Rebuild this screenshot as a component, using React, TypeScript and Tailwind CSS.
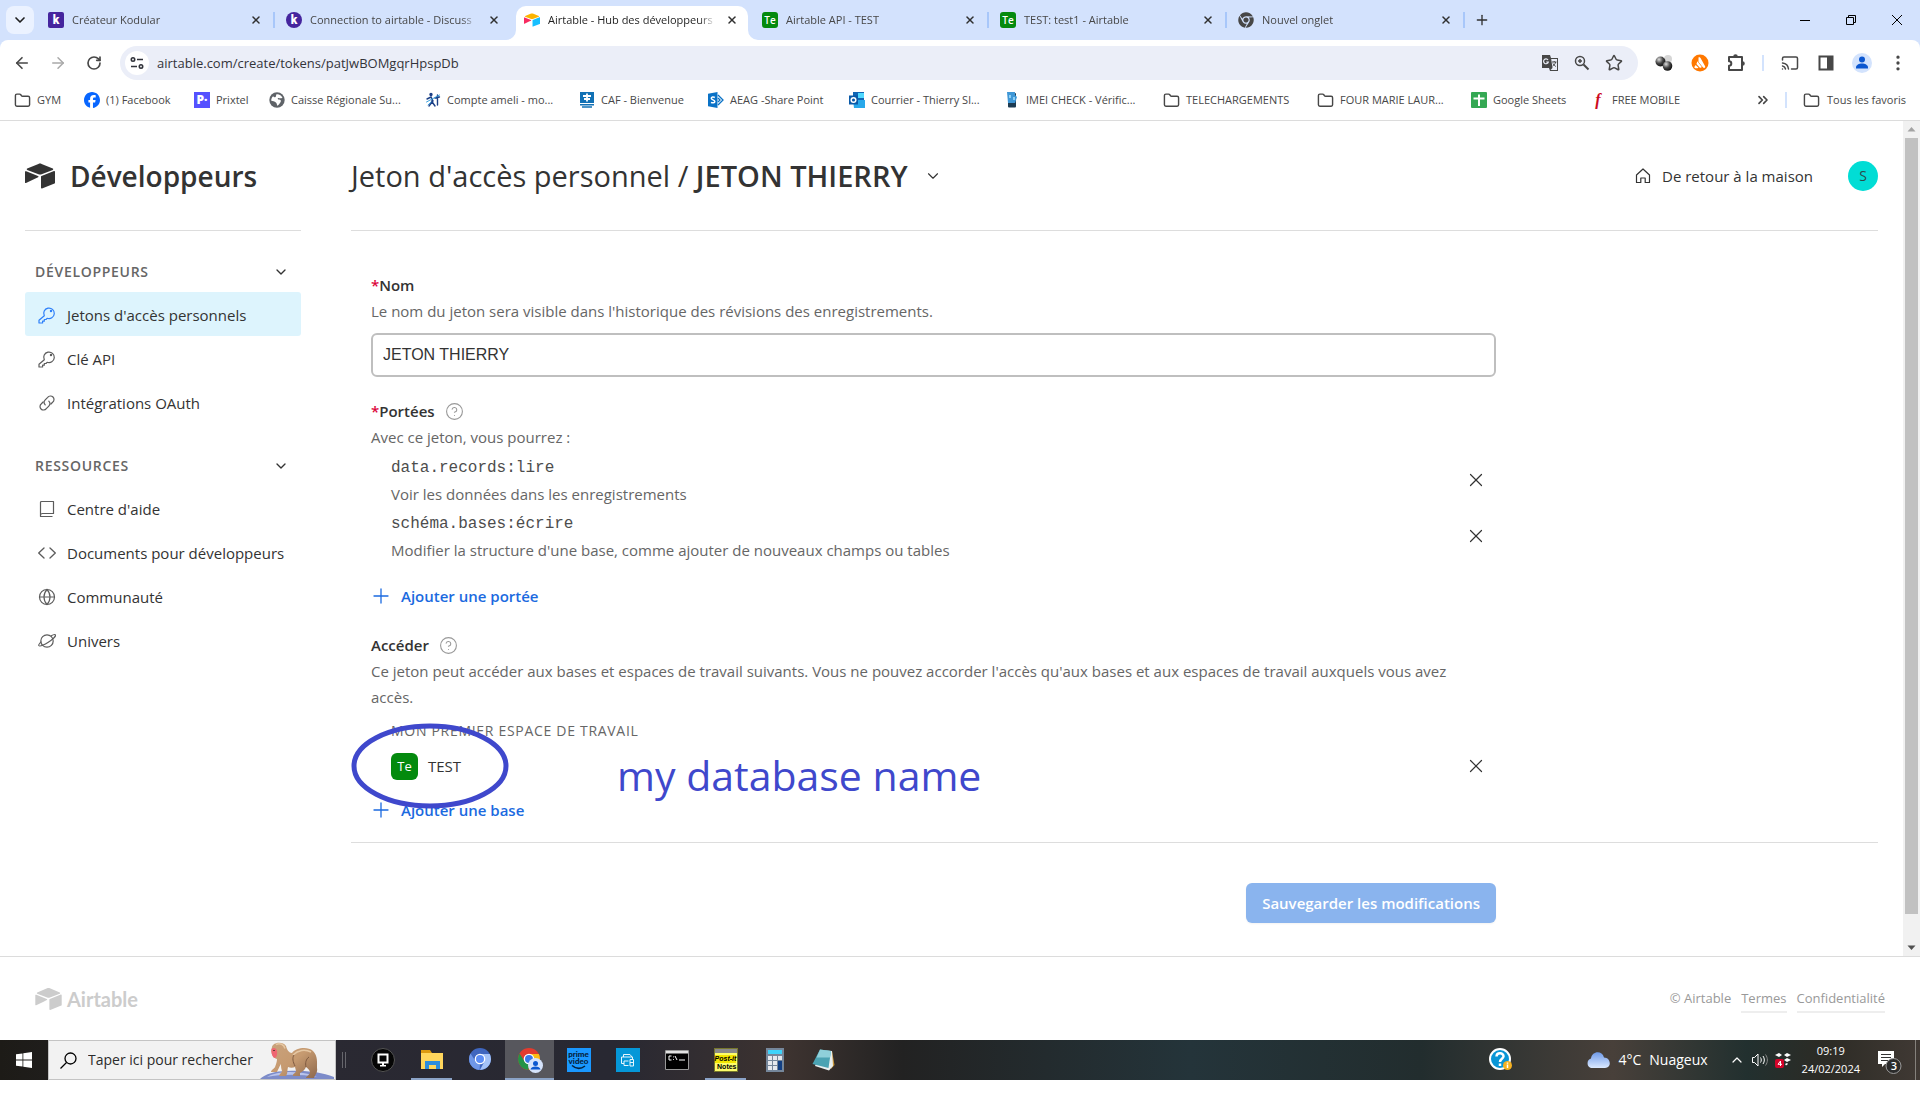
import { useState, type ReactNode } from "react";
import {
  ArrowLeft,
  ArrowRight,
  Cast,
  ChevronDown,
  ChevronUp,
  ChevronsRight,
  CircleHelp,
  EllipsisVertical,
  Folder,
  Globe,
  Plus,
  RotateCw,
  Star,
  X,
  ZoomIn,
} from "lucide-react";
import { SiFacebook } from "react-icons/si";
import { FaChrome } from "react-icons/fa";

/* ---------- icons ---------- */

function AirtableMark({ className, colors }: { className?: string; colors?: [string, string, string] }) {
  const [top, right, left] = colors ?? ["currentColor", "currentColor", "currentColor"];
  return (
    <svg viewBox="0 0 30 25" className={className} aria-hidden="true">
      <path fill={top} d="M13.4.4 2.2 5c-.6.3-.6 1.1 0 1.4l11.3 4.4c1 .4 2.1.4 3.1 0L27.8 6.4c.6-.3.6-1.1 0-1.4L16.6.4c-1-.4-2.2-.4-3.2 0Z" />
      <path fill={right} d="M16 13.1v11.1c0 .6.5.9 1 .7l12.500-4.900c.3-.1.5-.4.5-.7V8.200c0-.6-.5-.9-1-.7L16.500 12.400c-.3.1-.5.400-.5.700Z" />
      <path fill={left} d="m13.100 13.700-3.700 1.800-8.400 4c-.5.300-1-.1-1-.6V8.300c0-.2.100-.4.300-.5.200-.2.600-.2.900-.1l11.800 4.700c.6.200.7 1 .1 1.300Z" />
    </svg>
  );
}

function KodularIcon({ round }: { round?: boolean }) {
  return (
    <span
      className={`flex size-4 shrink-0 items-center justify-center bg-[#45259e] font-['Roboto',sans-serif] text-xs font-black leading-none text-white ${
        round ? "rounded-full" : "rounded-xs"
      }`}
    >
      k
    </span>
  );
}

function TeIcon() {
  return (
    <span className="flex size-4 shrink-0 items-center justify-center rounded-[3px] bg-[#048a0e] text-[10px] font-semibold leading-none text-white">
      Te
    </span>
  );
}

function KeyIcon() {
  return (
    <svg viewBox="0 0 18 18" className="size-[18px]" fill="none" stroke="currentColor" strokeWidth="1.200" strokeLinejoin="round" aria-hidden="true">
      <path d="M6.300 9.800A5.300 5.300 0 1 1 9.100 12.300L8 13.500H6.300v1.700H4.600V17H1v-2.700Z" />
      <circle cx="13" cy="5" r=".6" fill="currentColor" />
    </svg>
  );
}

function LinkIcon() {
  return (
    <svg viewBox="0 0 18 18" className="size-[18px]" fill="none" stroke="currentColor" strokeWidth="1.200" strokeLinecap="round" aria-hidden="true">
      <path d="M7.200 10.800a3.500 3.500 0 0 1 0-4.900l2.500-2.500a3.500 3.500 0 1 1 4.900 4.900l-1.700 1.700" />
      <path d="M10.800 7.200a3.500 3.500 0 0 1 0 4.900l-2.500 2.500a3.500 3.500 0 1 1-4.900-4.900l1.700-1.700" />
    </svg>
  );
}

function BookIcon() {
  return (
    <svg viewBox="0 0 18 18" className="size-[18px]" fill="none" stroke="currentColor" strokeWidth="1.200" strokeLinejoin="round" aria-hidden="true">
      <path d="M2.500 15.500V2.500a1 1 0 0 1 1-1h12v12h-11a2 2 0 0 0-2 2Zm0 0v1h12" />
    </svg>
  );
}

function CodeIcon() {
  return (
    <svg viewBox="0 0 18 18" className="size-[18px]" fill="none" stroke="currentColor" strokeWidth="1.300" strokeLinecap="round" strokeLinejoin="round" aria-hidden="true">
      <path d="M6 4 .700 9 6 14M12 4l5.300 5L12 14" />
    </svg>
  );
}

function PlanetIcon() {
  return (
    <svg viewBox="0 0 18 18" className="size-[18px]" fill="none" stroke="currentColor" strokeWidth="1.200" aria-hidden="true">
      <circle cx="9" cy="9" r="6.200" />
      <path d="M12.800 4C15.300 2.600 17 2.200 17.400 2.900c.7 1.200-2.500 4.500-7.100 7.300S1.500 14.600.8 13.500c-.400-.7.600-2.200 2.600-3.900" />
    </svg>
  );
}

function HomeIcon() {
  return (
    <svg viewBox="0 0 16 16" className="size-4" fill="none" stroke="currentColor" strokeWidth="1.200" strokeLinejoin="round" aria-hidden="true">
      <path d="M1.500 7 8 1l6.500 6v7.500h-4.300V10H5.800v4.500H1.500Z" />
    </svg>
  );
}

function TranslateIcon() {
  return (
    <svg viewBox="0 0 18 18" className="size-[18px]" aria-hidden="true">
      <path fill="#474747" d="M1 1h8l1 3h7v13H9l-1-3H1Z" />
      <path fill="#ebeef8" d="M10.200 5H16v11H9.500L11.500 14Z" />
      <path fill="none" stroke="#ebeef8" strokeWidth="1.200" d="M7 6a2.400 2.400 0 1 0 .3 2H5.200" />
      <path fill="none" stroke="#474747" d="M11 8h4.500M13.200 7v1M14.700 8c-.4 1.800-1.700 3.200-3 4M12 9.500c.6 1.200 1.600 2.200 2.800 3" />
    </svg>
  );
}

function TuneIcon() {
  return (
    <svg viewBox="0 0 16 16" className="size-4" fill="none" stroke="#30323a" strokeWidth="1.600" aria-hidden="true">
      <circle cx="4" cy="4.500" r="1.700" />
      <circle cx="12" cy="11.500" r="1.700" />
      <path d="M8 4.500h6M2 11.500h6" />
    </svg>
  );
}

function PuzzleIcon() {
  return (
    <svg viewBox="0 0 20 20" className="size-5" fill="none" stroke="currentColor" strokeWidth="2" strokeLinejoin="round" aria-hidden="true">
      <path d="M3 4h13v13H3v-4.200a2.300 2.300 0 0 0 0-4.600Z" />
      <path fill="currentColor" stroke="none" d="M7.200 3.500a2.300 2.300 0 0 1 4.600 0ZM16.500 8.200a2.300 2.300 0 0 1 0 4.600Z" />
    </svg>
  );
}

function BallsIcon() {
  return (
    <svg viewBox="0 0 18 18" className="size-[18px]" aria-hidden="true">
      <defs>
        <radialGradient id="ball" cx=".35" cy=".3" r=".8">
          <stop offset="0" stopColor="#ddd" />
          <stop offset=".5" stopColor="#444" />
          <stop offset="1" stopColor="#000" />
        </radialGradient>
      </defs>
      <circle cx="13" cy="5" r="4" fill="#d6d6d6" />
      <circle cx="5.500" cy="7.500" r="5" fill="url(#ball)" />
      <circle cx="12.500" cy="12" r="4.800" fill="url(#ball)" />
    </svg>
  );
}

function AvastIcon() {
  return (
    <svg viewBox="0 0 18 18" className="size-[18px]" aria-hidden="true">
      <circle cx="9" cy="9" r="8.500" fill="#ff7800" />
      <path fill="#fff" d="M7.500 3.500c1-.8 2 .1 2.300 1l4.300 7.700c.6 1.200-.8 2.300-2 1.400L7.500 8Z" />
      <path fill="#fff" d="m6.300 7.300 4.500 5.700c-.5 1-1.600.9-2.200.5L5.500 10ZM4.700 11l2.800 2.800c-2 1-4.300.5-4.200-.7Z" />
    </svg>
  );
}

function GlobeFavicon() {
  return (
    <svg viewBox="0 0 16 16" className="size-4" aria-hidden="true">
      <circle cx="8" cy="8" r="7.700" fill="#5f6368" />
      <path fill="#fff" d="M7.500 2.200c2.500-.4 5.200 1.400 6 3.600-1.500.8-3 .5-4 .2-1.300-.3-.8 1.600.5 1.600 1.600 0 2.400 1 1.600 2.300-.8 1.500-1.600 2.700-3.300 3.900-.6-1.600-.3-2.400-1.400-3.300C5.600 9.400 3.700 9 2.300 8.800 2 7 3 5.300 4.200 4.300c.6.8 1.400 1.200 2.300.6.800-.5.300-1.700 1-2.700Z" />
    </svg>
  );
}

function AmeliFavicon() {
  return (
    <svg viewBox="0 0 16 16" className="size-4" fill="none" stroke="#1b3f86" strokeWidth="1.400" strokeLinecap="round" aria-hidden="true">
      <circle cx="6" cy="2.500" r="1" fill="#1b3f86" />
      <path d="m2 7 4-2 2 4-4 5M6.500 9l3.500 5M12.500 3v10M10 6l4.500-1" />
      <path stroke="#3aa0dd" strokeWidth="1" d="M1.500 10 14.500 3M3 13l3-3" />
    </svg>
  );
}

function CafFavicon() {
  return (
    <svg viewBox="0 0 16 16" className="size-4" aria-hidden="true">
      <path fill="#1271b5" d="M1 0h14v11H1Z" />
      <path stroke="#fff" strokeWidth="1.800" d="M8 1.500v8M4 4h8M5 7h6" />
      <path stroke="#1271b5" strokeWidth="1.500" d="M1 12.800h14M3 15h10" />
    </svg>
  );
}

function SharePointFavicon() {
  return (
    <svg viewBox="0 0 16 16" className="size-4" aria-hidden="true">
      <path fill="#0a72c6" d="M0 1.800 9.500 0v16L0 14.200Z" />
      <path fill="none" stroke="#0a72c6" strokeWidth="1.300" d="m10 3 5 5-5 5M10 6l2 2-2 2" />
      <path fill="none" stroke="#fff" strokeWidth="1.500" d="M6.800 5.500C5.500 4.700 3.300 4.900 3.300 6.300c0 1.800 3.500 1.300 3.500 3.200 0 1.600-2.300 1.600-3.800.8" />
    </svg>
  );
}

function OutlookFavicon() {
  return (
    <svg viewBox="0 0 16 16" className="size-4" aria-hidden="true">
      <path fill="#1066b5" d="M4 0h11v8H4Z" />
      <path fill="#50d9ff" d="M9 1h6v5H9Z" />
      <path fill="#28a8ea" d="M4 8h12v8H5Z" />
      <path fill="#0a5aa8" d="M0 3.500h9v9H0Z" />
      <circle cx="4.500" cy="8" r="2.300" fill="none" stroke="#fff" strokeWidth="1.500" />
    </svg>
  );
}

function PhoneFavicon() {
  return (
    <svg viewBox="0 0 16 16" className="size-4" aria-hidden="true">
      <rect x="4" y="1" width="8" height="14.500" rx="1" fill="#1d3b52" />
      <path fill="#3f97d6" d="M3 0h8v3l2 2-2 6H4Z" />
      <path fill="#8fd0f5" d="M5 3h2v3H5ZM9 5h2v3H9Z" />
    </svg>
  );
}

function SheetsFavicon() {
  return (
    <svg viewBox="0 0 16 16" className="size-4" aria-hidden="true">
      <rect width="16" height="16" rx="1" fill="#34a853" />
      <path stroke="#fff" strokeWidth="2" d="M2.500 6.500h11M8 2.500v11.500" />
    </svg>
  );
}

/* ---------- browser chrome ---------- */

const tabs = [
  { title: "Créateur Kodular", icon: <KodularIcon /> },
  { title: "Connection to airtable - Discuss", icon: <KodularIcon round /> },
  {
    title: "Airtable - Hub des développeurs",
    icon: <AirtableMark className="size-4 shrink-0" colors={["#fcb400", "#18bfff", "#f82b60"]} />,
    active: true,
  },
  { title: "Airtable API - TEST", icon: <TeIcon /> },
  { title: "TEST: test1 - Airtable", icon: <TeIcon /> },
  { title: "Nouvel onglet", icon: <FaChrome className="size-4 shrink-0 text-[#474747]" /> },
];

function TabStrip() {
  return (
    <div className="flex h-10 items-stretch">
      <div className="flex w-[37px] shrink-0 items-center pl-[6px]">
        <button aria-label="Rechercher dans les onglets" className="flex size-7 items-center justify-center rounded-lg bg-[#ebf2ff]">
          <ChevronDown className="size-4 text-[#1f1f1f]" strokeWidth={2.500} />
        </button>
      </div>
      {tabs.map((tab, i) => {
        const nextActive = tabs[i + 1]?.active;
        return (
          <div key={tab.title} className="relative flex min-w-0 max-w-[238px] flex-1 items-center">
            {tab.active && (
              <>
                <div className="absolute inset-x-[3px] bottom-0 top-[6px] rounded-t-[10px] bg-white" />
                <svg viewBox="0 0 10 10" className="absolute -left-[7px] bottom-0 size-[10px] fill-white" aria-hidden="true">
                  <path d="M10 0v10H0A10 10 0 0 0 10 0Z" />
                </svg>
                <svg viewBox="0 0 10 10" className="absolute -right-[7px] bottom-0 size-[10px] fill-white" aria-hidden="true">
                  <path d="M0 0v10h10A10 10 0 0 1 0 0Z" />
                </svg>
              </>
            )}
            <div className="relative flex min-w-0 flex-1 items-center gap-2 pl-[11px] pr-[11px]">
              {tab.icon}
              <span
                className={`min-w-0 flex-1 overflow-hidden whitespace-nowrap [mask-image:linear-gradient(to_right,black_90%,transparent)] ${
                  tab.active ? "text-[#1f1f1f]" : "text-[#474747]"
                }`}
              >
                {tab.title}
              </span>
              <button aria-label={`Fermer ${tab.title}`} className="flex size-4 shrink-0 items-center justify-center">
                <X className="size-3 text-[#303030]" strokeWidth={3} />
              </button>
            </div>
            {!tab.active && !nextActive && <div className="absolute right-0 h-4 w-[2px] bg-[#a8c7fa]" />}
          </div>
        );
      })}
      <button aria-label="Nouvel onglet" className="flex w-[34px] shrink-0 items-center justify-center">
        <Plus className="size-4 text-[#303030]" />
      </button>
      <div className="ml-auto flex shrink-0 text-black">
        <button aria-label="Réduire" className="flex w-[46px] items-center justify-center">
          <svg viewBox="0 0 10 10" className="size-[10px]" stroke="currentColor"><path d="M0 5.500h10" /></svg>
        </button>
        <button aria-label="Restaurer" className="flex w-[46px] items-center justify-center">
          <svg viewBox="0 0 10 10" className="size-[10px]" fill="none" stroke="currentColor"><path d="M.5 2.500h7v7h-7ZM2.500 2.500v-2h7v7h-2" /></svg>
        </button>
        <button aria-label="Fermer" className="flex w-[46px] items-center justify-center">
          <svg viewBox="0 0 10 10" className="size-[10px]" stroke="currentColor"><path d="m0 0 10 10M10 0 0 10" /></svg>
        </button>
      </div>
    </div>
  );
}

function ToolButton({ label, children }: { label: string; children: ReactNode }) {
  return (
    <button aria-label={label} className="flex h-8 w-9 shrink-0 items-center justify-center text-[#474747]">
      {children}
    </button>
  );
}

function Toolbar() {
  const [url, setUrl] = useState("airtable.com/create/tokens/patJwBOMgqrHpspDb");
  return (
    <div className="flex h-[46px] items-center pl-1 pr-1">
      <ToolButton label="Précédent"><ArrowLeft className="size-[18px]" strokeWidth={2.200} /></ToolButton>
      <ToolButton label="Suivant"><ArrowRight className="size-[18px] text-[#a9a9a9]" /></ToolButton>
      <ToolButton label="Actualiser"><RotateCw className="size-4" strokeWidth={2.500} /></ToolButton>
      <div className="ml-2 flex h-[34px] flex-1 items-center rounded-full bg-[#ebeef8] pl-[5px] pr-2">
        <button aria-label="Informations sur le site" className="flex size-6 items-center justify-center rounded-full bg-white">
          <TuneIcon />
        </button>
        <input
          aria-label="Adresse"
          value={url}
          onChange={(e) => setUrl(e.target.value)}
          className="ml-2 min-w-0 flex-1 bg-transparent text-[13px] text-[#33343a] outline-none"
        />
        <button aria-label="Traduire" className="flex w-8 justify-center"><TranslateIcon /></button>
        <button aria-label="Zoom" className="flex w-8 justify-center text-[#474747]">
          <svg viewBox="0 0 16 16" className="size-4" fill="none" stroke="currentColor" strokeWidth="1.500" aria-hidden="true">
            <circle cx="6" cy="6" r="4.500" />
            <path strokeWidth="2" d="m9.500 9.500 5 5" />
            <path d="M4 6h4M6 4v4" />
          </svg>
        </button>
        <button aria-label="Ajouter aux favoris" className="flex w-8 justify-center text-[#474747]"><Star className="size-[18px]" /></button>
      </div>
      <div className="ml-2 flex items-center">
        <ToolButton label="Extension"><BallsIcon /></ToolButton>
        <ToolButton label="Avast"><AvastIcon /></ToolButton>
        <ToolButton label="Extensions"><PuzzleIcon /></ToolButton>
        <div className="mx-2 h-4 w-[2px] bg-[#d3e3fd]" />
        <ToolButton label="Caster"><Cast className="size-[18px]" /></ToolButton>
        <ToolButton label="Panneau latéral">
          <svg viewBox="0 0 16 16" className="size-4" aria-hidden="true">
            <rect x="1.500" y="1.500" width="13" height="13" fill="none" stroke="#474747" strokeWidth="2" />
            <path fill="#474747" d="M9 1h6v14H9Z" />
          </svg>
        </ToolButton>
        <ToolButton label="Profil">
          <svg viewBox="0 0 20 20" className="size-5" aria-hidden="true">
            <circle cx="10" cy="10" r="10" fill="#d3e3fd" />
            <circle cx="10" cy="6.500" r="3" fill="#0b57d0" />
            <path fill="#0b57d0" d="M4 15.500v-1c0-2.500 3-4 6-4s6 1.500 6 4v1Z" />
          </svg>
        </ToolButton>
        <ToolButton label="Menu"><EllipsisVertical className="size-5" /></ToolButton>
      </div>
    </div>
  );
}

const folder = <Folder className="size-[17px] text-[#474747]" />;

const bookmarks = [
  { label: "GYM", icon: folder, width: "w-[70px]" },
  { label: "(1) Facebook", icon: <SiFacebook className="size-4 text-[#0866ff]" />, width: "w-[110px]" },
  {
    label: "Prixtel",
    icon: <span className="flex size-4 items-center justify-center bg-[#5551ff] text-xs font-extrabold leading-none text-white">P·</span>,
    width: "w-[75px]",
  },
  { label: "Caisse Régionale Su...", icon: <GlobeFavicon />, width: "w-[156px]" },
  { label: "Compte ameli - mo...", icon: <AmeliFavicon />, width: "w-[154px]" },
  { label: "CAF - Bienvenue", icon: <CafFavicon />, width: "w-[129px]" },
  { label: "AEAG -Share Point", icon: <SharePointFavicon />, width: "w-[141px]" },
  { label: "Courrier - Thierry Sl...", icon: <OutlookFavicon />, width: "w-[155px]" },
  { label: "IMEI CHECK - Vérific...", icon: <PhoneFavicon />, width: "w-[159px]" },
  { label: "TELECHARGEMENTS", icon: folder, width: "w-[154px]" },
  { label: "FOUR MARIE LAUR...", icon: folder, width: "w-[154px]" },
  { label: "Google Sheets", icon: <SheetsFavicon />, width: "w-[119px]" },
  {
    label: "FREE MOBILE",
    icon: <span className="flex size-4 items-center justify-center font-['Liberation_Serif',serif] text-base font-bold italic leading-none text-[#cd0a1e]">f</span>,
    width: "w-[110px]",
  },
];

function BookmarksBar() {
  return (
    <nav aria-label="Favoris" className="flex h-[35px] items-center border-b border-[#dcdcdc] pb-[6px] pl-[14px] pr-[14px] text-[#474747]">
      {bookmarks.map((item) => (
        <a key={item.label} href="#" className={`flex items-center gap-[6px] whitespace-nowrap ${item.width}`}>
          <span className="shrink-0">{item.icon}</span>
          {item.label}
        </a>
      ))}
      <div className="ml-auto flex items-center">
        <button aria-label="Autres favoris" className="mr-[14px]"><ChevronsRight className="size-4" strokeWidth={2.500} /></button>
        <div className="mr-4 h-4 w-[2px] bg-[#d3e3fd]" />
        <a href="#" className="flex items-center gap-[7px] whitespace-nowrap">{folder}Tous les favoris</a>
      </div>
    </nav>
  );
}

/* ---------- page ---------- */

const navGroups = [
  {
    title: "Développeurs",
    items: [
      { label: "Jetons d'accès personnels", icon: <KeyIcon />, active: true },
      { label: "Clé API", icon: <KeyIcon /> },
      { label: "Intégrations OAuth", icon: <LinkIcon /> },
    ],
  },
  {
    title: "Ressources",
    items: [
      { label: "Centre d'aide", icon: <BookIcon /> },
      { label: "Documents pour développeurs", icon: <CodeIcon /> },
      { label: "Communauté", icon: <Globe className="size-[18px]" strokeWidth={1.600} /> },
      { label: "Univers", icon: <PlanetIcon /> },
    ],
  },
];

function Sidebar() {
  return (
    <aside className="w-[276px] shrink-0">
      <div className="flex h-[110px] items-center gap-[15px] border-b border-[#dddddd]">
        <AirtableMark className="h-[26px] w-[30px]" />
        <span className="text-[28px] font-semibold">Développeurs</span>
      </div>
      <div className="flex flex-col gap-[22px] pt-[21px]">
        {navGroups.map((group) => (
          <nav key={group.title} aria-label={group.title}>
            <button className="flex h-10 w-full items-center justify-between pl-[10px] pr-3 text-sm font-semibold uppercase tracking-wider text-[#666666]">
              {group.title}
              <ChevronDown className="size-4 text-[#333333]" />
            </button>
            {group.items.map((item) => (
              <a
                key={item.label}
                href="#"
                className={`flex h-11 items-center gap-[11px] whitespace-nowrap rounded-[3px] pl-[13px] pt-px ${item.active ? "bg-[#ddf4fd]" : ""}`}
              >
                <span className={item.active ? "text-[#2d7ff9]" : "text-[#5c5c5c]"}>{item.icon}</span>
                {item.label}
              </a>
            ))}
          </nav>
        ))}
      </div>
    </aside>
  );
}

function RemoveButton({ label }: { label: string }) {
  return (
    <button type="button" aria-label={`Supprimer ${label}`} className="flex size-10 items-center justify-center">
      <X className="size-[22px]" strokeWidth={1.300} />
    </button>
  );
}

function AddButton({ children }: { children: ReactNode }) {
  return (
    <button type="button" className="flex items-center gap-[10px] font-semibold text-[#1b6ae0]">
      <svg viewBox="0 0 20 20" className="size-5" stroke="currentColor" strokeWidth="1.300" strokeLinecap="round" aria-hidden="true">
        <path d="M10 3v14M3 10h14" />
      </svg>
      {children}
    </button>
  );
}

const scopes = [
  { name: "data.records:lire", description: "Voir les données dans les enregistrements" },
  { name: "schéma.bases:écrire", description: "Modifier la structure d'une base, comme ajouter de nouveaux champs ou tables" },
];

function TokenForm() {
  const [name, setName] = useState("JETON THIERRY");
  return (
    <form onSubmit={(e) => e.preventDefault()}>
      <div className="border-b border-[#dddddd] px-5 pb-[19px] pt-[41px]">
        <div className="max-w-[1125px]">
          <label htmlFor="token-name" className="block font-semibold">
            <span className="text-[#dc043b]">*</span>Nom
          </label>
          <p className="text-[#666666]">Le nom du jeton sera visible dans l'historique des révisions des enregistrements.</p>
          <input
            id="token-name"
            value={name}
            onChange={(e) => setName(e.target.value)}
            className="mt-[9px] h-11 w-full rounded-md border-2 border-[#bfbfbf] px-[10px] font-['Liberation_Sans',sans-serif] text-base"
          />

          <h2 className="mt-[21px] flex items-center gap-[10px] font-semibold">
            <span><span className="text-[#dc043b]">*</span>Portées</span>
            <CircleHelp className="size-[19px] text-[#999999]" strokeWidth={1.400} />
          </h2>
          <p className="text-[#666666]">Avec ce jeton, vous pourrez :</p>
          <ul className="pt-[2px]">
            {scopes.map((scope) => (
              <li key={scope.name} className="flex h-14 items-center justify-between pl-5">
                <div className="pt-[2px]">
                  <div className="font-['Liberation_Mono',monospace] text-base leading-[26px] text-[#4d4d4d]">{scope.name}</div>
                  <p className="text-[#666666]">{scope.description}</p>
                </div>
                <RemoveButton label={scope.name} />
              </li>
            ))}
          </ul>
          <div className="pt-[19px]"><AddButton>Ajouter une portée</AddButton></div>

          <h2 className="mt-[23px] flex items-center gap-[10px] font-semibold">
            Accéder
            <CircleHelp className="size-[19px] text-[#999999]" strokeWidth={1.400} />
          </h2>
          <p className="max-w-[1110px] text-[#666666]">
            Ce jeton peut accéder aux bases et espaces de travail suivants. Vous ne pouvez accorder l'accès qu'aux bases et aux espaces de travail auxquels vous avez accès.
          </p>
          <h3 className="mt-2 pl-5 text-sm uppercase tracking-wider text-[#666666] leading-[26px]">Mon premier espace de travail</h3>
          <div className="relative flex h-11 items-center pl-5">
            <span className="flex size-[27px] items-center justify-center rounded-md bg-[#048a0e] text-[13px] text-white">Te</span>
            <span className="ml-[10px] flex-1">TEST</span>
            <RemoveButton label="TEST" />
            <svg viewBox="0 0 160 88" className="pointer-events-none absolute -left-5 -top-[22px] z-10 h-[88px] w-40" fill="none" stroke="#3f48cc" strokeWidth="5" aria-hidden="true">
              <ellipse cx="79" cy="44" rx="76" ry="40" />
            </svg>
            <span className="absolute left-[246px] top-1 whitespace-nowrap text-[41px] leading-[54px] text-[#3f48cc]">my database name</span>
          </div>
          <div className="pt-[9px]"><AddButton>Ajouter une base</AddButton></div>
        </div>
      </div>
      <div className="flex max-w-[1145px] justify-end pb-8 pt-10">
        <button type="submit" className="h-10 rounded-md bg-[#8ab4ee] px-4 font-semibold text-white shadow-xs">
          Sauvegarder les modifications
        </button>
      </div>
    </form>
  );
}

function PageHeader() {
  return (
    <header className="flex h-[110px] items-center border-b border-[#dddddd]">
      <h1 className="flex items-center text-[29px]">
        <span className="whitespace-pre">Jeton d'accès personnel / </span>
        <strong className="font-semibold">JETON THIERRY</strong>
        <ChevronDown className="ml-4 size-[18px]" strokeWidth={1.500} />
      </h1>
      <a href="#" className="ml-auto flex items-center gap-[11px]">
        <HomeIcon />
        De retour à la maison
      </a>
      <button aria-label="Compte" className="ml-[35px] size-[30px] rounded-full bg-[#01ddd5] text-sm text-[#2c4a4a]">S</button>
    </header>
  );
}

function Scrollbar() {
  return (
    <div className="flex w-[17px] shrink-0 flex-col items-center bg-[#f1f1f1]" aria-hidden="true">
      <svg viewBox="0 0 17 17" className="size-[17px]" fill="#a3a3a3"><path d="m8.500 6 4 4.500h-8Z" /></svg>
      <div className="w-[13px] flex-1 bg-[#c1c1c1]" />
      <div className="h-[25px]" />
      <svg viewBox="0 0 17 17" className="size-[17px]" fill="#505050"><path d="m8.500 11 4-4.500h-8Z" /></svg>
    </div>
  );
}

function PageFooter() {
  return (
    <footer className="flex h-[84px] items-center justify-between border-t border-[#dcdcdc] pl-[35px] pr-[35px]">
      <div className="flex items-center gap-[5px] text-[#cccccc]">
        <AirtableMark className="h-[22px] w-[27px]" />
        <span className="font-['Lato',sans-serif] text-[20px] font-bold leading-6">Airtable</span>
      </div>
      <div className="flex gap-[10px] text-[13px] text-[#999999]">
        <span>© Airtable</span>
        <a href="#" className="border-b-2 border-[#eeeeee]">Termes</a>
        <a href="#" className="border-b-2 border-[#eeeeee]">Confidentialité</a>
      </div>
    </footer>
  );
}

/* ---------- taskbar ---------- */

function Monkey() {
  return (
    <svg viewBox="0 0 76 38" className="h-[38px] w-[76px]" aria-hidden="true">
      <defs>
        <linearGradient id="fur" x1="0" x2="1" y2="1">
          <stop offset="0" stopColor="#c9a27c" />
          <stop offset=".5" stopColor="#c69a70" />
          <stop offset="1" stopColor="#8d684c" />
        </linearGradient>
      </defs>
      <path fill="#7d8cc9" d="M1 38c5-5 15-8 27-8 18-1 34 1 47 6v2Z" />
      <path fill="#b9c4ec" d="M8 36c8-5 22-6 36-4 6 1 10 2 14 4-16-3-36-3-50 0Z" />
      <path
        fill="url(#fur)"
        d="M13 6C14 1 24 0 27 5c1 4 3 7 6 7 4-5 15-7 21-2 5 5 4 12 4 17 1 4-2 7-3 10h-8c0-2 4-3 4-6-1-3-3-4-4-5-1 3-4 5-6 6v3h-7c-1-2 3-3 3-5l-1-4c-2 1-5 1-7 0-1 3 0 6-2 9h-7c0-2 3-3 3-5-1-3-1-5-1-7-2 3-3 6-4 8h-6c0-2 3-3 4-5 1-3 2-5 2-8-4-1-7-6-5-12Z"
      />
      <path fill="none" stroke="#e5c7a3" strokeWidth="1.500" d="M17 3.500c4-2 8 0 9 4M34 14c5-5 12-6 18-3" />
      <path fill="none" stroke="#7f5b41" strokeWidth="1" d="M36 25c-2-4-3-8-1-11M47 26c-1-4 0-8 3-10" />
      <path fill="#ef6672" d="M12.500 8c2-2 5-1 5.500 2 .5 4-.5 7-3 7-2-2-3-6-2.500-9Z" />
      <path stroke="#6b3a35" strokeWidth="1.200" d="M14 9.500h2" />
    </svg>
  );
}

function ChromeDisc({ colors, children }: { colors: [string, string, string, string]; children?: ReactNode }) {
  const [top, right, left, core] = colors;
  return (
    <svg viewBox="0 0 26 26" className="size-[26px]" aria-hidden="true">
      <circle cx="12" cy="12" r="11" fill={top} />
      <path fill={right} d="M12 7h9.800A11 11 0 0 1 12 23l4.400-8.500Z" />
      <path fill={left} d="M2.500 6.500 7.700 14.500 12 17.500 11.500 23A11 11 0 0 1 2.500 6.500Z" />
      <circle cx="12" cy="12" r="5.300" fill="#fff" />
      <circle cx="12" cy="12" r="4" fill={core} />
      {children}
    </svg>
  );
}

const taskbarApps = [
  {
    label: "Bureau à distance",
    icon: (
      <svg viewBox="0 0 24 24" className="size-6" aria-hidden="true">
        <circle cx="12" cy="12" r="11.500" fill="#050505" stroke="#555" />
        <path fill="none" stroke="#fff" strokeWidth="2" d="M7.500 6.500h9v8h-9Z" />
        <path fill="#fff" d="M11 15h2v2h2v1.500H9V17h2Z" />
      </svg>
    ),
  },
  {
    label: "Explorateur de fichiers",
    running: true,
    icon: (
      <svg viewBox="0 0 24 20" className="h-5 w-[24px]" aria-hidden="true">
        <path fill="#dc9a10" d="M1 0h9l2 3H1Z" />
        <path fill="#ffd65c" d="M1 3h22v16H1Z" />
        <path fill="#2c8ddd" d="M5 11h15v8h-4v-4H9v4H5Z" />
      </svg>
    ),
  },
  { label: "Chromium", icon: <ChromeDisc colors={["#3f66bf", "#a4c2f7", "#6f97e8", "#5c8df5"]} /> },
  {
    label: "Google Chrome",
    running: true,
    active: true,
    icon: (
      <ChromeDisc colors={["#e33b2e", "#fbbc14", "#249347", "#3b78e7"]}>
        <circle cx="18.500" cy="18.500" r="7.500" fill="#d5e3fb" />
        <circle cx="18.500" cy="16.500" r="2.500" fill="#0b57d0" />
        <path fill="#0b57d0" d="M13.500 22.500c.5-4 9.500-4 10 0Z" />
      </ChromeDisc>
    ),
  },
  {
    label: "Prime Video",
    icon: (
      <span className="flex size-6 flex-col items-center bg-[#1a98ff] pt-[3px] font-['Lato',sans-serif] text-[8px] font-black leading-[7px] text-[#06213b]">
        prime
        <span>video</span>
        <svg viewBox="0 0 16 5" className="h-[5px] w-4" fill="none" stroke="#06213b" strokeWidth="1.500"><path d="M1 .5c4 3.500 9 3.500 13 .5" /></svg>
      </span>
    ),
  },
  {
    label: "HP Smart",
    icon: (
      <svg viewBox="0 0 24 24" className="size-6" aria-hidden="true">
        <path fill="#0597d8" d="M0 0h24v24H0Z" />
        <path fill="none" stroke="#e8f6fd" d="M7.500 9V6.500H14L16 9M8 15.500H5.500V9H16.500v2M12.500 13H8v4.500h4.500M14 11.500h3.500v6.500H14ZM14 14.500h3.500" />
      </svg>
    ),
  },
  {
    label: "Invite de commandes",
    icon: (
      <svg viewBox="0 0 24 20" className="h-5 w-6" aria-hidden="true">
        <path fill="#000" stroke="#999" d="M.5.500h23v19H.5Z" />
        <path fill="#e2e2e2" d="M1 1h22v2.500H1Z" />
        <path fill="none" stroke="#fff" d="M6.500 6H4v4h2.500M8.500 6.500v.8M8.500 9v.8M10 6l2 4M14 10h6" />
      </svg>
    ),
  },
  {
    label: "Post-it Notes",
    running: true,
    icon: (
      <span className="flex size-6 flex-col items-center border border-[#77772c] bg-[#fdfd6c] font-['Liberation_Sans',sans-serif] text-[7px] font-bold leading-[8px] text-black">
        <span className="h-1 w-full bg-[#8a8a8a]" />
        <span className="mt-[2px] bg-[#f3e600] italic">Post-it</span>
        <span className="self-end">Notes</span>
      </span>
    ),
  },
  {
    label: "Calculatrice",
    icon: (
      <svg viewBox="0 0 18 24" className="h-6 w-[18px]" aria-hidden="true">
        <path fill="#75869a" d="M0 0h18v24H0Z" />
        <path fill="#3ed3fa" d="M2 2h14v4H2Z" />
        <path fill="#e6e9ee" d="M2 8h4v4H2ZM7 8h4v4H7ZM12 8h4v4h-4ZM2 13h4v4H2ZM7 13h4v4H7ZM2 18h4v4H2ZM7 18h4v4H7Z" />
        <path fill="#123f83" d="M12 13h4v9h-4Z" />
      </svg>
    ),
  },
  {
    label: "Bloc-notes",
    icon: (
      <svg viewBox="0 0 24 24" className="size-6" aria-hidden="true">
        <path fill="#c9973a" d="m20 3 2.500 14-3.500 4Z" />
        <path fill="#e9efef" d="m9 2 11 1 1 15-4 4.500L3 18Z" />
        <path fill="#4ba3b3" d="M8 1.500 19 3l-2.500 17L.5 16Z" />
        <path fill="#8fd0da" d="m8 1.500 11 1.500-1 6.500-13.500 0Z" />
      </svg>
    ),
  },
];

function Taskbar() {
  return (
    <footer className="flex h-10 bg-[linear-gradient(to_right,#1d1b17_0%,#2a2932_16%,#282832_32%,#3d3330_41%,#222222_47%,#24343a_62%,#222d2e_74%,#48403a_84%,#22302f_91%,#2c2b25_95%,#403934_100%)] text-white">
      <button aria-label="Démarrer" className="flex w-12 shrink-0 items-center justify-center">
        <svg viewBox="0 0 16 16" className="size-4" fill="currentColor">
          <path d="M0 2.300 6.500 1.400v6.200H0ZM7.300 1.300 16 0v7.600H7.300ZM0 8.400h6.500v6.200L0 13.700ZM7.300 8.400H16V16l-8.700-1.300Z" />
        </svg>
      </button>
      <label className="flex w-72 shrink-0 items-center overflow-hidden border border-[#c4c4c4] bg-[#f2f2f2] pl-[11px] text-black">
        <svg viewBox="0 0 17 17" className="size-[17px] shrink-0" fill="none" stroke="currentColor" strokeWidth="1.300" aria-hidden="true">
          <circle cx="10.500" cy="6.500" r="5.500" />
          <path d="m6.500 10.500-6 6" />
        </svg>
        <input
          aria-label="Rechercher"
          placeholder="Taper ici pour rechercher"
          className="ml-[11px] min-w-0 flex-1 bg-transparent text-[14px] outline-none placeholder:text-[#2b2b2b]"
        />
        <Monkey />
      </label>
      <div className="ml-[6px] flex w-4 items-center gap-[2px]">
        <div className="h-4 w-px bg-[#66666c]" />
        <div className="h-4 w-px bg-[#66666c]" />
      </div>
      {taskbarApps.map((app) => (
        <button
          key={app.label}
          aria-label={app.label}
          className={`relative flex w-[49px] shrink-0 items-center justify-center ${app.active ? "bg-[#57575d]" : ""}`}
        >
          {app.icon}
          {app.running && <span className={`absolute bottom-0 h-[2px] bg-[#8ba3c7] ${app.active ? "inset-x-0" : "inset-x-1"}`} />}
        </button>
      ))}
      <div className="ml-auto flex items-center">
        <svg viewBox="0 0 24 24" className="mr-[73px] size-6" aria-hidden="true">
          <circle cx="11" cy="11" r="10" fill="#0a96d6" stroke="#fff" strokeWidth="2" />
          <path fill="none" stroke="#fff" strokeWidth="2.500" d="M7.500 8.500c.2-4.500 7.300-4 7 0-.2 2.300-3.500 2.400-3.500 5.500M11 15.500V18" />
          <circle cx="18.500" cy="17.500" r="4.500" fill="#f6b221" />
          <path stroke="#fff" strokeWidth="1.500" d="M18.500 14.500v1.200M18.500 16.500v3.500" />
        </svg>
        <svg viewBox="0 0 24 16" className="h-4 w-6" aria-hidden="true">
          <defs>
            <linearGradient id="cloud" x2="0" y2="1">
              <stop offset="0" stopColor="#6f9ae8" />
              <stop offset="1" stopColor="#dbe9ff" />
            </linearGradient>
          </defs>
          <path fill="url(#cloud)" d="M5 16a5 5 0 0 1 0-9.500C6-1 16-2 18 5.500c7 0 8 10.500 1 10.500Z" />
        </svg>
        <span className="ml-2 text-sm">4°C</span>
        <span className="ml-2 text-sm">Nuageux</span>
        <ChevronUp className="ml-[21px] size-4" strokeWidth={1.800} />
        <svg viewBox="0 0 18 18" className="ml-[6px] size-[18px]" fill="none" stroke="currentColor" aria-hidden="true">
          <path d="M1.500 6.500h2L7 3v12l-3.500-3.500h-2ZM9.500 6.500c1 1.500 1 3.500 0 5M12 5c1.800 2.500 1.800 5.500 0 8" />
          <path stroke="#888" d="M14.500 3.500c2.500 3.500 2.500 7.500 0 11" />
        </svg>
        <svg viewBox="0 0 16 16" className="ml-[6px] size-4" aria-hidden="true">
          <path fill="#fff" d="M0 3l4-2 3 2-3 2ZM9 3l3-2 4 2-4 2ZM9 8l3-2 4 2-4 2ZM10 12l2-1 1 1-2 1.500Z" />
          <rect x="0" y="7" width="9" height="9" rx="2" fill="#d4032a" />
          <path fill="none" stroke="#fff" d="M5.500 14V9L3 12.300h4" />
        </svg>
        <div className="ml-[11px] flex flex-col items-center text-[11px] leading-[18px]">
          <span>09:19</span>
          <span>24/02/2024</span>
        </div>
        <button aria-label="Notifications" className="relative ml-[15px] mr-[12px] size-7">
          <svg viewBox="0 0 28 28" className="size-7" aria-hidden="true">
            <path fill="#fff" d="M3 5h16v13H10l-3 3v-3H3Z" />
            <path stroke="#333" d="M6 8.500h10M6 11.500h10M6 14.500h7" />
            <circle cx="18.500" cy="20" r="7.500" fill="#2b2b2b" stroke="#9b9b9b" />
          </svg>
          <span className="absolute bottom-0 right-[6px] text-[11px] font-semibold leading-4">3</span>
        </button>
        <div className="mr-1 h-10 w-px bg-[#85817c]" />
      </div>
    </footer>
  );
}

export default function App() {
  return (
    <div className="flex min-h-screen flex-col bg-white pb-4 font-['Open_Sans','Noto_Sans',sans-serif] text-[15px] leading-[26px] text-[#333333]">
      <div className="bg-[#d3e2fd] text-[11px] leading-4">
        <TabStrip />
        <div className="rounded-t-lg bg-white">
          <Toolbar />
          <BookmarksBar />
        </div>
      </div>
      <div className="flex flex-1">
        <div className="flex min-w-0 flex-1 gap-[50px] pl-[25px] pr-[25px]">
          <Sidebar />
          <main className="min-w-0 flex-1">
            <PageHeader />
            <TokenForm />
          </main>
        </div>
        <Scrollbar />
      </div>
      <PageFooter />
      <Taskbar />
    </div>
  );
}
